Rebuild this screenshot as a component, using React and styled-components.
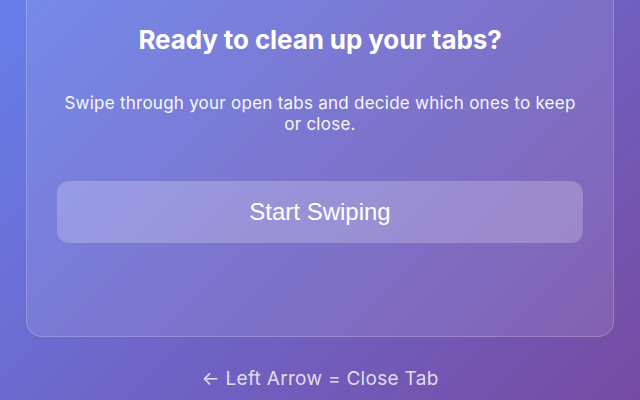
import styled, { createGlobalStyle } from "styled-components";

const GlobalStyle = createGlobalStyle`
  html, body {
    margin: 0;
    padding: 0;
  }
  body {
    font-family: Inter, "Noto Sans", sans-serif;
    background: linear-gradient(135deg, #667eea 0%, #764ba2 100%);
    min-height: 400px;
    overflow: hidden;
  }
`;

const Page = styled.div`
  width: 640px;
  height: 400px;
  box-sizing: border-box;
  padding: 0 26px;
  display: flex;
  flex-direction: column;
  align-items: stretch;
  overflow: hidden;
`;

const Card = styled.div`
  margin-top: -31px;
  padding: 54px 30px 93px;
  background: rgba(255, 255, 255, 0.1);
  border: 1px solid rgba(255, 255, 255, 0.2);
  border-radius: 16px;
  display: flex;
  flex-direction: column;
  align-items: center;
  color: #fff;
`;

const Title = styled.h2`
  margin: 0;
  font-size: 26px;
  font-weight: 700;
  line-height: 32px;
  letter-spacing: -0.1px;
  text-align: center;
`;

const Text = styled.p`
  margin: 37px 0 0;
  font-size: 17px;
  line-height: 21px;
  letter-spacing: 0.25px;
  text-align: center;
  opacity: 0.95;
`;

const StartButton = styled.button`
  margin-top: 46px;
  width: 100%;
  height: 62px;
  border: none;
  border-radius: 12px;
  background: rgba(255, 255, 255, 0.22);
  color: #fff;
  font-family: "Liberation Sans", Arial, sans-serif;
  font-size: 24px;
  cursor: pointer;
`;

const Hint = styled.div`
  margin-top: 31px;
  line-height: 22px;
  text-align: center;
  font-size: 19px;
  letter-spacing: 0.3px;
  color: rgba(255, 255, 255, 0.8);
`;

export default function App() {
  return (
    <>
      <GlobalStyle />
      <Page>
        <Card>
          <Title>Ready to clean up your tabs?</Title>
          <Text>
            Swipe through your open tabs and decide which ones to keep
            <br />
            or close.
          </Text>
          <StartButton>Start Swiping</StartButton>
        </Card>
        <Hint>← Left Arrow = Close Tab</Hint>
      </Page>
    </>
  );
}
